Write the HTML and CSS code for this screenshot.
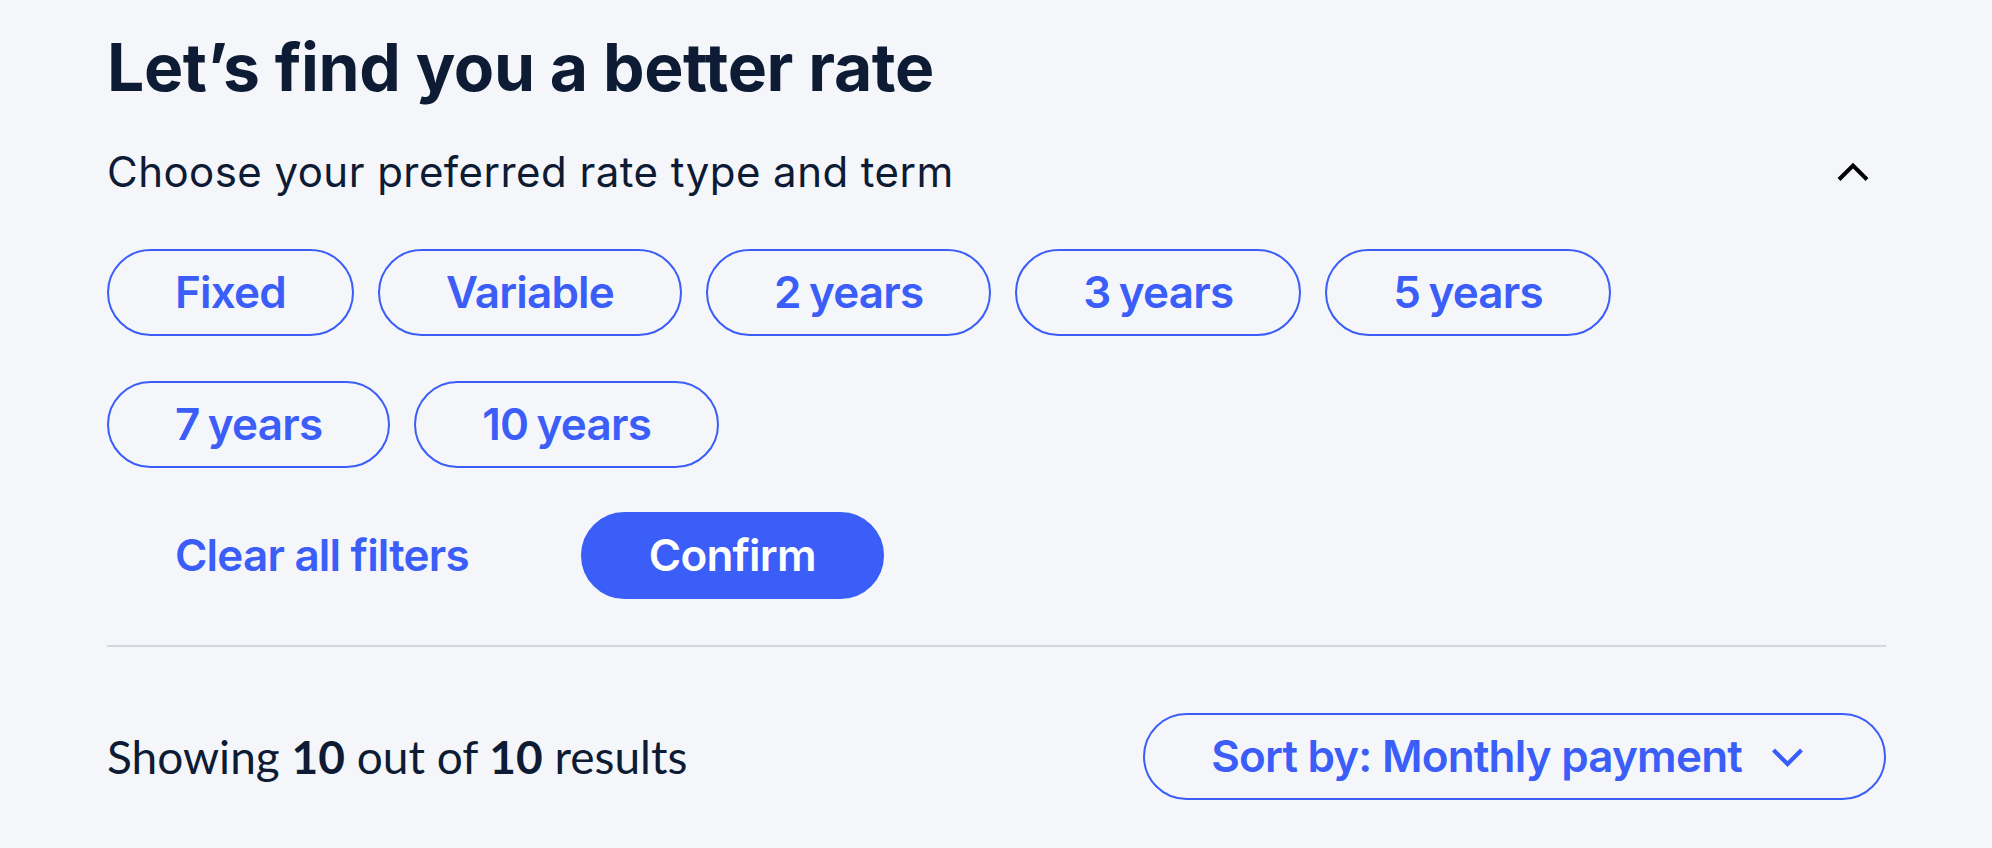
FILE: index.html
```html
<!DOCTYPE html>
<html lang="en">
<head>
<meta charset="utf-8">
<title>Rate filters</title>
<link rel="stylesheet" href="styles.css">
</head>
<body>
<main class="panel">
  <h1 class="title">Let’s find you a better rate</h1>
  <div class="subhead">
    <p class="subtitle">Choose your preferred rate type and term</p>
    <button class="toggle" aria-label="Collapse filters">
      <svg width="32" height="20" viewBox="0 0 32 20"><polyline points="2,17.5 16,3.5 30,17.5" fill="none" stroke="#000" stroke-width="4"/></svg>
    </button>
  </div>
  <div class="chips">
    <button class="chip">Fixed</button>
    <button class="chip">Variable</button>
    <button class="chip">2 years</button>
    <button class="chip">3 years</button>
    <button class="chip">5 years</button>
    <button class="chip">7 years</button>
    <button class="chip">10 years</button>
  </div>
  <div class="actions">
    <button class="btn btn-link">Clear all filters</button>
    <button class="btn btn-primary">Confirm</button>
  </div>
  <hr class="divider">
  <div class="results">
    <p class="count">Showing <b>10</b> out of <b>10</b> results</p>
    <button class="btn sort">
      <span>Sort by: Monthly payment</span>
      <svg width="33" height="20" viewBox="0 0 33 20"><polyline points="2.5,3 16.5,17 30.5,3" fill="none" stroke="#3a5ef7" stroke-width="4.2"/></svg>
    </button>
  </div>
</main>
</body>
</html>
```

FILE: styles.css
```css
* { box-sizing: border-box; }

html, body {
  margin: 0;
  padding: 0;
  background: #f5f6fa;
}

body {
  font-family: Inter, "Liberation Sans", sans-serif;
  color: #0e1b34;
}

.panel {
  padding: 27px 106px 0 107px;
}

.title {
  margin: 0;
  font-size: 66px;
  line-height: 80px;
  font-weight: 700;
  letter-spacing: -0.4px;
  color: #0e1b34;
}

.subhead {
  margin-top: 40px;
  display: flex;
  align-items: center;
  justify-content: space-between;
}

.subtitle {
  margin: 0;
  font-size: 42px;
  line-height: 50px;
  font-weight: 400;
  letter-spacing: 0.45px;
}

.toggle {
  margin: 0 17px 0 0;
  padding: 0;
  border: 0;
  background: none;
  display: flex;
}

.chips {
  margin-top: 52px;
  display: flex;
  flex-wrap: wrap;
  column-gap: 24px;
  row-gap: 45px;
}

.chip, .btn {
  font-family: Inter, "Liberation Sans", sans-serif;
  font-size: 44px;
  line-height: 55px;
  font-weight: 600;
  letter-spacing: -0.8px;
  padding: 14px 66px;
  border: 2px solid #3a5ef7;
  border-radius: 999px;
  background: transparent;
  color: #3a5ef7;
  cursor: pointer;
}

.chip {
  word-spacing: -2px;
}

.actions {
  margin-top: 44px;
  display: flex;
  align-items: center;
  gap: 44px;
}

.btn-link {
  border-color: transparent;
}

.btn-primary {
  background: #3a5ef7;
  border-color: #3a5ef7;
  color: #fff;
}

.divider {
  margin: 46px 0 0;
  border: 0;
  height: 2px;
  background: #d3d7df;
}

.results {
  margin-top: 66px;
  display: flex;
  align-items: center;
  justify-content: space-between;
}

.count {
  margin: 0;
  font-family: Lato, "Liberation Sans", sans-serif;
  font-size: 46px;
  line-height: 54px;
  color: #0e1b34;
}

.count b {
  font-weight: 700;
}

.sort {
  display: flex;
  align-items: center;
  gap: 29px;
  padding: 14px 80px 14px 66px;
}
```
